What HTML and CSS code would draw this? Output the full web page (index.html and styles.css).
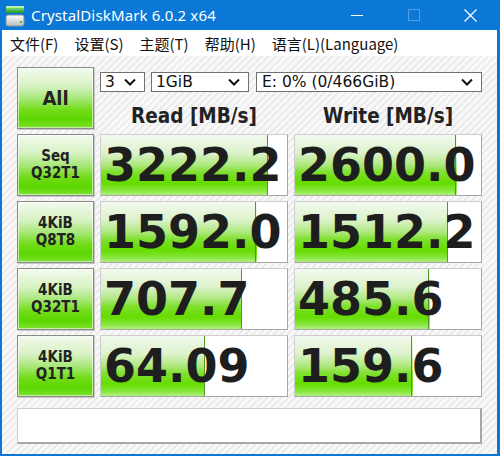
FILE: index.html
```html
<!DOCTYPE html>
<html lang="zh-CN">
<head>
    <meta charset="UTF-8">
    <meta name="viewport" content="width=device-width, initial-scale=1.0">
    <title>CrystalDiskMark 6.0.2 x64</title>
    <link rel="stylesheet" href="styles.css">
</head>
<body>
    <div class="window">
        <!-- 標題列：圖示 + 名稱 + 三個視窗按鈕 -->
        <div class="titlebar">
            <svg class="app-icon" width="20" height="22" viewBox="0 0 20 22">
                <defs>
                    <linearGradient id="g-top" x1="0" y1="0" x2="0" y2="1">
                        <stop offset="0" stop-color="#9cf08a"/>
                        <stop offset="1" stop-color="#1f9a2a"/>
                    </linearGradient>
                    <linearGradient id="g-body" x1="0" y1="0" x2="0" y2="1">
                        <stop offset="0" stop-color="#ffffff"/>
                        <stop offset="1" stop-color="#b8bcc0"/>
                    </linearGradient>
                </defs>
                <rect x="1" y="1" width="18" height="7" rx="1" fill="url(#g-top)"/>
                <rect x="1" y="1" width="18" height="2" fill="#c8f8b8" opacity=".7"/>
                <rect x="1" y="10" width="18" height="11" rx="2" fill="url(#g-body)" stroke="#8a9096" stroke-width="1"/>
                <rect x="15" y="16" width="2" height="2" fill="#2fcf30"/>
            </svg>
            <span class="title">CrystalDiskMark 6.0.2 x64</span>
            <div class="controls">
                <span class="ctl">
                    <svg width="12" height="12" viewBox="0 0 12 12"><line x1="0" y1="6.5" x2="12" y2="6.5" stroke="#fff" stroke-width="1"/></svg>
                </span>
                <span class="ctl">
                    <svg width="12" height="12" viewBox="0 0 12 12"><rect x="0.5" y="0.5" width="11" height="11" fill="none" stroke="#4f9fe6" stroke-width="1"/></svg>
                </span>
                <span class="ctl">
                    <svg width="13" height="13" viewBox="0 0 13 13"><path d="M0.5 0.5 L12.5 12.5 M12.5 0.5 L0.5 12.5" stroke="#fff" stroke-width="1.2"/></svg>
                </span>
            </div>
        </div>

        <div class="menubar">
            <span>文件(F)</span><span>设置(S)</span><span>主题(T)</span><span>帮助(H)</span><span>语言(L)(Language)</span>
        </div>

        <div class="main">
            <div class="board">
                <div class="btn all">All</div>
                <div class="head">
                    <div class="selects">
                        <div class="select s-count">3<svg width="12" height="8" viewBox="0 0 12 8"><polyline points="1,1.5 6,6.5 11,1.5" fill="none" stroke="#111" stroke-width="2"/></svg></div>
                        <div class="select s-size">1GiB<svg width="12" height="8" viewBox="0 0 12 8"><polyline points="1,1.5 6,6.5 11,1.5" fill="none" stroke="#111" stroke-width="2"/></svg></div>
                        <div class="select s-drive">E: 0% (0/466GiB)<svg width="12" height="8" viewBox="0 0 12 8"><polyline points="1,1.5 6,6.5 11,1.5" fill="none" stroke="#111" stroke-width="2"/></svg></div>
                    </div>
                    <div class="col-titles">
                        <div class="col-title">Read [MB/s]</div>
                        <div class="col-title">Write [MB/s]</div>
                    </div>
                </div>

                <div class="btn">Seq<br>Q32T1</div>
                <div class="val" style="--p: 90%">3222.2</div>
                <div class="val" style="--p: 87%">2600.0</div>

                <div class="btn">4KiB<br>Q8T8</div>
                <div class="val" style="--p: 84%">1592.0</div>
                <div class="val" style="--p: 82.5%">1512.2</div>

                <div class="btn">4KiB<br>Q32T1</div>
                <div class="val" style="--p: 76%">707.7</div>
                <div class="val" style="--p: 72.5%">485.6</div>

                <div class="btn">4KiB<br>Q1T1</div>
                <div class="val" style="--p: 56%">64.09</div>
                <div class="val" style="--p: 63.5%">159.6</div>
            </div>
            <div class="status"></div>
        </div>
    </div>
</body>
</html>
```

FILE: styles.css
```css
*{
    margin: 0;
    padding: 0;
    box-sizing: border-box;
}
body{
    width: 500px;
    height: 456px;
    overflow: hidden;
    font-family: "DejaVu Sans", sans-serif;
}
.window{
    width: 500px;
    height: 456px;
    background-color: #0b78d7;
    padding: 0 3px 2px 2px;
    display: flex;
    flex-direction: column;
}

/* 標題列 */
.titlebar{
    height: 30px;
    display: flex;
    align-items: center;
    color: #fff;
}
.app-icon{
    margin-left: 3px;
    margin-top: 1px;
}
.title{
    margin-left: 6px;
    font-family: "Noto Sans", "Open Sans", sans-serif;
    font-size: 15px;
    letter-spacing: 0.15px;
}
.controls{
    margin-left: auto;
    margin-right: -2px;
    display: flex;
    height: 30px;
}
.ctl{
    width: 57px;
    display: flex;
    align-items: center;
    justify-content: center;
}

/* 選單列 */
.menubar{
    height: 26px;
    background-color: #fff;
    display: flex;
    align-items: center;
    font-family: "Noto Sans CJK SC", "Noto Sans", sans-serif;
    font-size: 15px;
    color: #111;
}
.menubar span{
    padding: 0 8px;
}

/* 主畫面：斜線底紋 */
.main{
    flex: 1;
    padding: 11px 15px 10px;
    background: repeating-linear-gradient(135deg, #f8f8f8 0, #f8f8f8 3px, #ebebeb 3px, #ebebeb 5px);
}
.board{
    display: grid;
    grid-template-columns: 77px 188px 188px;
    grid-template-rows: repeat(5, 62px);
    column-gap: 6px;
    row-gap: 5px;
}

/* 綠色測試按鈕 */
.btn{
    border: 1px solid #8a8a8a;
    box-shadow: inset 0 0 0 1px rgba(255,255,255,.55), 1px 1px 0 #c8c8c8;
    background: linear-gradient(#f3faee 0%, #d8f2c4 30%, #a4e674 52%, #72dc18 70%, #5cd600 86%, #7ee230 100%);
    display: flex;
    align-items: center;
    justify-content: center;
    text-align: center;
    font-family: "DejaVu Sans Condensed", "DejaVu Sans", sans-serif;
    font-stretch: condensed;
    font-weight: bold;
    font-size: 15px;
    line-height: 17px;
    color: #222;
}
.btn.all{
    font-size: 20px;
}

.head{
    grid-column: 2 / 4;
}
.selects{
    display: flex;
    margin-top: 5px;
}
.select{
    height: 20px;
    border: 1px solid #707070;
    background-color: #fff;
    display: flex;
    align-items: center;
    justify-content: space-between;
    padding: 0 8px 0 4px;
    font-size: 15.5px;
    color: #111;
    white-space: nowrap;
}
.s-count{ width: 45px; }
.s-size{ width: 98px; margin-left: 6px; }
.s-drive{ width: 226px; margin-left: 7px; padding-left: 5px; }

.col-titles{
    display: grid;
    grid-template-columns: 188px 188px;
    column-gap: 6px;
    margin-top: 12px;
}
.col-title{
    text-align: center;
    font-family: "DejaVu Sans Condensed", "DejaVu Sans", sans-serif;
    font-stretch: condensed;
    font-weight: bold;
    font-size: 20.5px;
    line-height: 24px;
    color: #222;
}

/* 數值格：背景長條寬度由 --p 控制 */
.val{
    border: 1px solid #cdcdcd;
    border-right-color: #a6a6a6;
    border-bottom-color: #a6a6a6;
    background:
        linear-gradient(#4c9a24, #4c9a24) calc(var(--p) - 1px) 0 / 1px 100% no-repeat,
        linear-gradient(#f2f9ee 0%, #dcf2cc 30%, #aee87e 50%, #80e030 62%, #66dc00 80%, #84e63a 92%, #b2ef7e 100%) 0 0 / var(--p) 100% no-repeat,
        #fff;
    display: flex;
    align-items: center;
    padding-left: 3px;
    overflow: hidden;
    white-space: nowrap;
    font-family: "DejaVu Sans", sans-serif;
    font-weight: bold;
    font-size: 46px;
    color: #1e1e1e;
}

.status{
    margin-top: 11px;
    height: 36px;
    background-color: #fff;
    border: 1px solid #cfcfcf;
    border-right: 2px solid #a8a8a8;
    border-bottom: 2px solid #a8a8a8;
}
```
